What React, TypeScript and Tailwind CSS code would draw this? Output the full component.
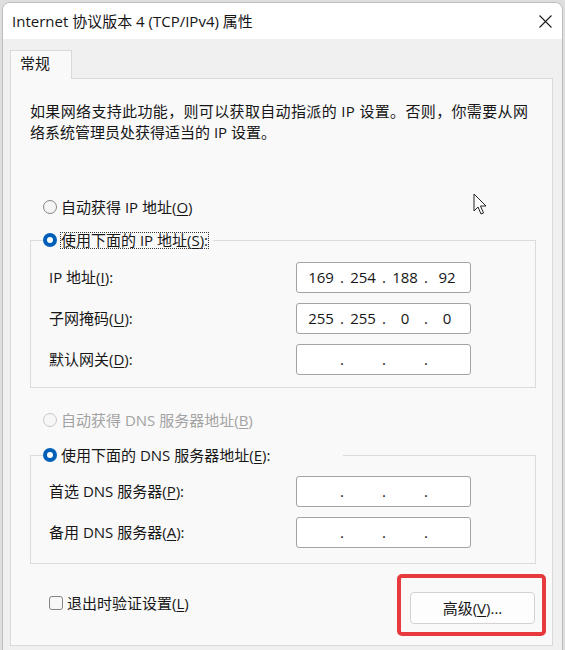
import { Fragment, type ReactNode } from "react";

const FONT = "font-['Open_Sans','Noto_Sans_CJK_SC',sans-serif]";

function Key({ k }: { k: string }) {
  return <span className="underline underline-offset-2">{k}</span>;
}

function Radio({ checked, disabled, children }: { checked?: boolean; disabled?: boolean; children: ReactNode }) {
  let circle = "border border-[#858585] bg-[#f5f5f5]";
  if (checked) circle = "bg-[#005fb8]";
  if (disabled) circle = "border border-[#c9c9c9] bg-[#f7f7f7]";
  return (
    <div className="flex h-[20px] items-center gap-[4px]">
      <span className={`flex h-[14px] w-[14px] shrink-0 items-center justify-center rounded-full ${circle}`}>
        {checked && <span className="h-[6px] w-[6px] rounded-full bg-white" />}
      </span>
      <span className={`whitespace-nowrap ${disabled ? "text-[#a3a3a3]" : ""}`}>{children}</span>
    </div>
  );
}

function IpField({ parts }: { parts?: string[] }) {
  const p = parts ?? ["", "", "", ""];
  return (
    <div className="flex h-[31px] w-[175px] items-center rounded-[3px] border border-[#a3a3a3] bg-white pl-[7px]">
      {p.map((s, i) => (
        <Fragment key={i}>
          {i > 0 && <span className="w-[8px] text-center">.</span>}
          <span className="w-[34px] text-center">{s}</span>
        </Fragment>
      ))}
    </div>
  );
}

function FieldRow({ label, parts }: { label: ReactNode; parts?: string[] }) {
  return (
    <div className="flex h-[31px] items-center">
      <span className="w-[247px] whitespace-nowrap">{label}</span>
      <IpField parts={parts} />
    </div>
  );
}

function GroupHeader({ width, children }: { width: number; children: ReactNode }) {
  return (
    <div className="flex h-[20px]">
      <div className="mt-[10px] h-[10px] w-[13px] border-l border-t border-[#dcdcdc]" />
      <div className="flex items-center" style={{ width }}>
        {children}
      </div>
      <div className="mt-[10px] h-[10px] flex-1 border-r border-t border-[#dcdcdc]" />
    </div>
  );
}

export default function App() {
  return (
    <div className={`relative h-[650px] w-[565px] overflow-hidden bg-[#dedede] pl-[2px] pt-[2px] text-[15px] text-[#161616] ${FONT}`}>
      <div className="h-[700px] w-[561px] overflow-hidden rounded-t-[8px] border border-[#bdbdbd] bg-[#f0f0f0]">
        {/* Title bar */}
        <div className="flex h-[36px] items-center justify-between bg-white pl-[9px] pr-[10px]">
          <span className="whitespace-nowrap">Internet 协议版本 4 (TCP/IPv4) 属性</span>
          <svg width="13" height="13" viewBox="0 0 13 13" className="text-[#1b1b1b]">
            <path d="M0.5 0.5 L12.5 12.5 M12.5 0.5 L0.5 12.5" stroke="currentColor" strokeWidth="1.1" fill="none" />
          </svg>
        </div>

        <div className="pl-[7px] pt-[11px]">
          {/* Tab */}
          <div className="relative z-10 -mb-px flex h-[29px] w-[62px] items-center border-x border-t border-[#d9d9d9] bg-[#f9f9f9] pb-[3px] pl-[9px]">
            常规
          </div>

          {/* Panel */}
          <div className="h-[568px] w-[543px] border border-[#d9d9d9] bg-[#f9f9f9]">
            <p className="whitespace-nowrap pl-[19px] pt-[22px] leading-[21px]">
              <span className="tracking-[0.35px]">如果网络支持此功能，则可以获取自动指派的 IP 设置。否则，你需要从网</span>
              <br />
              络系统管理员处获得适当的 IP 设置。
            </p>

            <div className="mt-[54px] pl-[32px]">
              <Radio>
                自动获得 IP 地址(<Key k="O" />)
              </Radio>
            </div>

            {/* Group 1 */}
            <div className="ml-[19px] mr-[16px] mt-[13px]">
              <GroupHeader width={170}>
                <div className="flex h-[20px] items-center gap-[3px]">
                  <span className="flex h-[14px] w-[14px] shrink-0 items-center justify-center rounded-full bg-[#005fb8]">
                    <span className="h-[6px] w-[6px] rounded-full bg-white" />
                  </span>
                  <span className="whitespace-nowrap border border-dotted border-[#333] leading-[15px]">
                    使用下面的 IP 地址(<Key k="S" />):
                  </span>
                </div>
              </GroupHeader>
              <div className="flex flex-col gap-[10px] border-x border-b border-[#dcdcdc] pb-[12px] pl-[18px] pt-[12px]">
                <FieldRow label={<>IP 地址(<Key k="I" />):</>} parts={["169", "254", "188", "92"]} />
                <FieldRow label={<>子网掩码(<Key k="U" />):</>} parts={["255", "255", "0", "0"]} />
                <FieldRow label={<>默认网关(<Key k="D" />):</>} />
              </div>
            </div>

            <div className="mt-[22px] pl-[32px]">
              <Radio disabled>
                自动获得 DNS 服务器地址(<Key k="B" />)
              </Radio>
            </div>

            {/* Group 2 */}
            <div className="ml-[19px] mr-[16px] mt-[15px]">
              <GroupHeader width={300}>
                <Radio checked>
                  使用下面的 DNS 服务器地址(<Key k="E" />):
                </Radio>
              </GroupHeader>
              <div className="flex flex-col gap-[10px] border-x border-b border-[#dcdcdc] pb-[15px] pl-[18px] pt-[11px]">
                <FieldRow label={<>首选 DNS 服务器(<Key k="P" />):</>} />
                <FieldRow label={<>备用 DNS 服务器(<Key k="A" />):</>} />
              </div>
            </div>

            {/* Bottom row */}
            <div className="mt-[10px] flex justify-between pl-[38px] pr-[6px]">
              <div className="mt-[19px] flex h-[20px] items-center gap-[4px]">
                <span className="h-[14px] w-[14px] rounded-[3px] border border-[#858585] bg-[#f7f7f7]" />
                <span className="whitespace-nowrap">
                  退出时验证设置(<Key k="L" />)
                </span>
              </div>
              <div className="rounded-[5px] border-4 border-[#e8393c] pb-[8px] pl-[9px] pr-[7px] pt-[14px]">
                <div className="flex h-[32px] w-[125px] items-center justify-center rounded-[4px] border border-[#d3d3d3] bg-[#fdfdfd]">
                  高级(<Key k="V" />)...
                </div>
              </div>
            </div>
          </div>
        </div>
      </div>

      {/* Mouse pointer */}
      <svg className="absolute left-[473px] top-[193px]" width="15" height="23" viewBox="0 0 15 23">
        <path
          d="M1 1 L1 18 L5 14 L8 21 L10.5 20 L7.5 13 L13 13 Z"
          fill="white"
          stroke="#222"
          strokeWidth="1"
          strokeLinejoin="round"
        />
      </svg>
    </div>
  );
}
